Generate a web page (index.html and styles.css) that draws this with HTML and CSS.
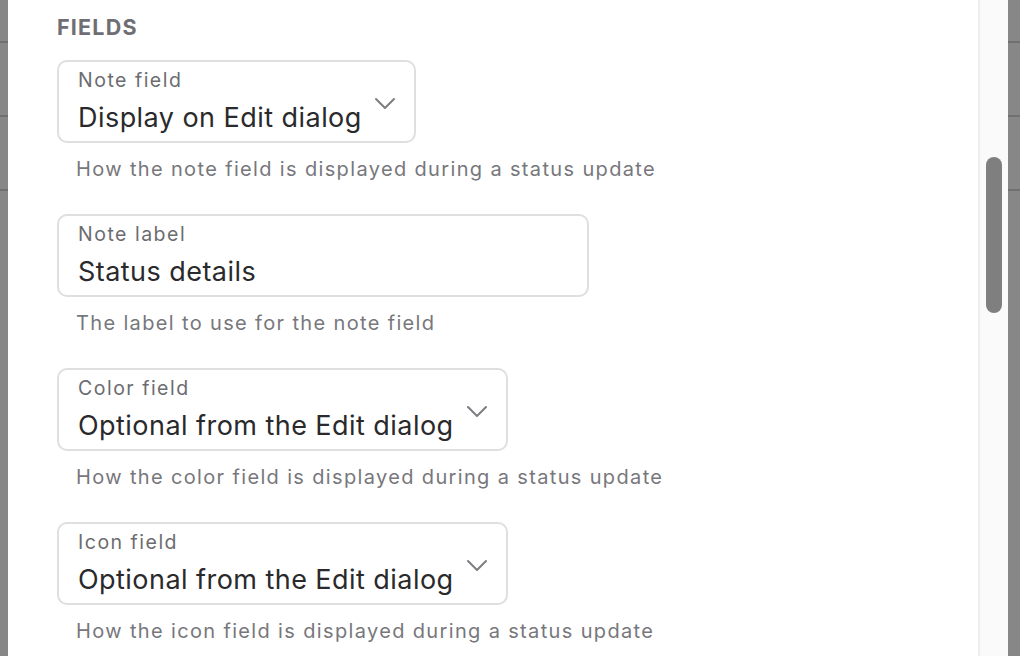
FILE: index.html
```html
<!DOCTYPE html>
<html>
<head>
<meta charset="utf-8">
<link rel="stylesheet" href="styles.css">
</head>
<body>
<div class="page">
  <div class="backdrop">
    <div class="row r1"></div>
    <div class="row r2"></div>
    <div class="row r2"></div>
    <div class="row rest"></div>
  </div>
  <main class="panel">
    <h2 class="heading">FIELDS</h2>
    <div class="field">
      <div class="box select">
        <div class="texts">
          <span class="label">Note field</span>
          <span class="value">Display on Edit dialog</span>
        </div>
        <svg class="chev" viewBox="0 0 22 13" width="22" height="13"><path d="M2 2 L11 11 L20 2" fill="none" stroke="#7d7d82" stroke-width="2" stroke-linecap="round" stroke-linejoin="round"/></svg>
      </div>
      <p class="help">How the note field is displayed during a status update</p>
    </div>
    <div class="field">
      <div class="box text">
        <div class="texts">
          <span class="label">Note label</span>
          <span class="value">Status details</span>
        </div>
      </div>
      <p class="help">The label to use for the note field</p>
    </div>
    <div class="field">
      <div class="box select">
        <div class="texts">
          <span class="label">Color field</span>
          <span class="value">Optional from the Edit dialog</span>
        </div>
        <svg class="chev" viewBox="0 0 22 13" width="22" height="13"><path d="M2 2 L11 11 L20 2" fill="none" stroke="#7d7d82" stroke-width="2" stroke-linecap="round" stroke-linejoin="round"/></svg>
      </div>
      <p class="help">How the color field is displayed during a status update</p>
    </div>
    <div class="field">
      <div class="box select">
        <div class="texts">
          <span class="label">Icon field</span>
          <span class="value">Optional from the Edit dialog</span>
        </div>
        <svg class="chev" viewBox="0 0 22 13" width="22" height="13"><path d="M2 2 L11 11 L20 2" fill="none" stroke="#7d7d82" stroke-width="2" stroke-linecap="round" stroke-linejoin="round"/></svg>
      </div>
      <p class="help">How the icon field is displayed during a status update</p>
    </div>
  </main>
  <div class="track"><div class="thumb"></div></div>
  <div class="backdrop right">
    <div class="row r1"></div>
    <div class="row r2"></div>
    <div class="row r2"></div>
    <div class="row rest"></div>
  </div>
</div>
</body>
</html>
```
FILE: styles.css
```css
html, body {
  margin: 0;
  padding: 0;
}
body {
  font-family: Inter, "Noto Sans", sans-serif;
  background: #fff;
}
.page {
  display: flex;
  width: 1020px;
  height: 656px;
  overflow: hidden;
}
.backdrop {
  width: 8px;
  flex: none;
  display: flex;
  flex-direction: column;
  background: #878787;
}
.backdrop.right {
  width: 12px;
}
.row {
  flex: none;
  box-sizing: border-box;
  border-bottom: 2px solid #707070;
}
.r1 { height: 43px; }
.r2 { height: 74px; }
.rest { flex: 1; border-bottom: none; }
.panel {
  flex: 1;
  min-width: 0;
  background: #fff;
  padding: 14px 0 0 49px;
  box-sizing: border-box;
}
.heading {
  margin: 0 0 20px;
  font-size: 21.5px;
  font-weight: 700;
  line-height: 26px;
  color: #6e6e73;
  letter-spacing: 1.2px;
}
.field {
  margin-bottom: 32px;
}
.box {
  display: inline-flex;
  align-items: center;
  box-sizing: border-box;
  height: 83px;
  border: 2px solid #dfdfe1;
  border-radius: 10px;
  padding: 0 18px 0 19px;
}
.box.text {
  width: 532px;
}
.texts {
  display: flex;
  flex-direction: column;
  align-self: flex-start;
  padding-top: 5px;
}
.label {
  font-size: 19.5px;
  line-height: 26px;
  color: #6c6c70;
  letter-spacing: 1.5px;
}
.value {
  font-size: 27px;
  line-height: 36px;
  color: #2a2a2c;
  margin-top: 7px;
  letter-spacing: 0.45px;
}
.chev {
  margin-left: 12px;
  margin-top: 4px;
}
.help {
  margin: 13px 0 0 19px;
  font-size: 20px;
  line-height: 26px;
  color: #77777c;
  letter-spacing: 1.35px;
}
.track {
  width: 28px;
  flex: none;
  background: #fafafa;
  border-left: 2px solid #ededed;
  box-sizing: content-box;
  padding-top: 157px;
}
.thumb {
  width: 16px;
  height: 156px;
  margin-left: 6px;
  border-radius: 8px;
  background: #7f7f7f;
}
```
